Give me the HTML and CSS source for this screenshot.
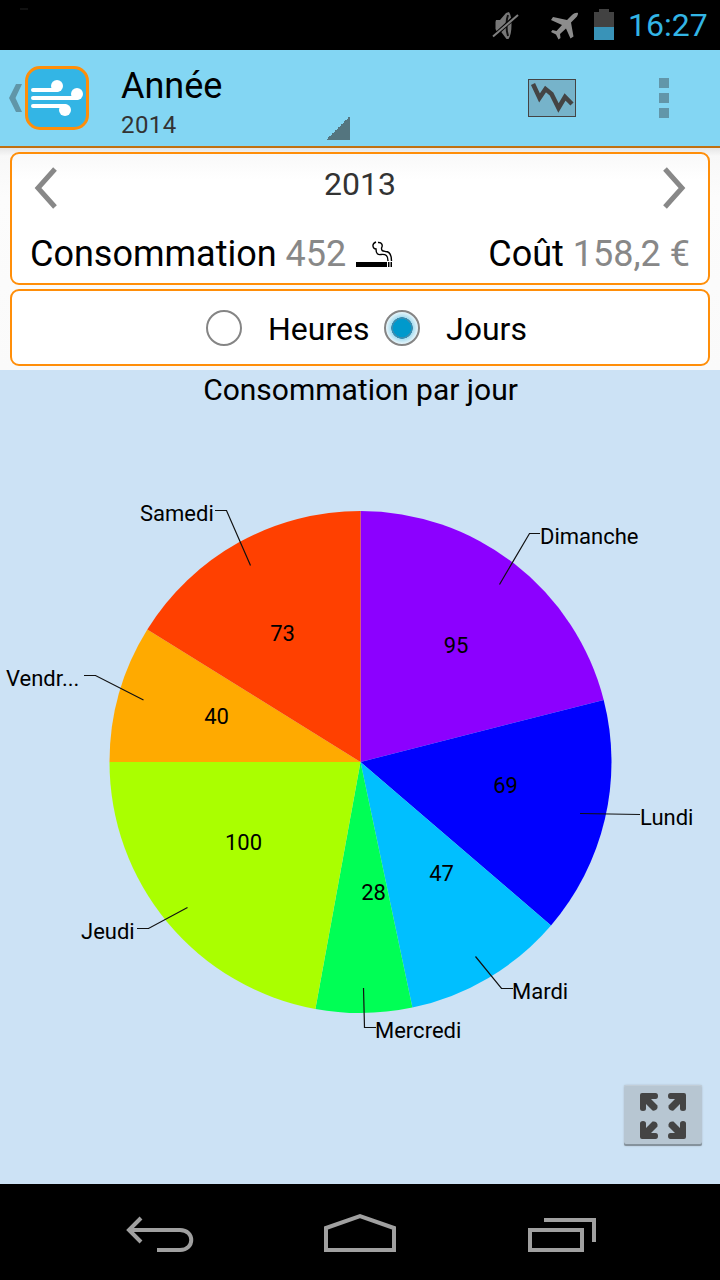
FILE: index.html
```html
<!DOCTYPE html>
<html lang="fr">
<head>
    <meta charset="UTF-8">
    <title>Consommation</title>
    <link rel="stylesheet" href="styles.css">
</head>
<body>

    <div class="status-bar">
        <svg class="status-icons" width="150" height="50" viewBox="470 0 150 50">
            <path d="M478 9h8" transform="translate(-458 0)" stroke="#222"/>
            <path d="M496 20h4l6-7 3-1c2 3 2.500 7 2.500 13s-1 11-3 14h-2l-6-8h-4l-1-2v-7z" fill="#777"/>
            <path d="M508 15c-2 5-2 15 0 21" fill="none" stroke="#111" stroke-width="2"/>
            <path d="M493 37l25-23" stroke="#000" stroke-width="4"/>
            <path d="M493 36.500l25-21.500" stroke="#808080" stroke-width="2"/>
            <path d="M578 13c-2-.5-4 .5-6 2l-5 5-14-3-2 3 11 5-5.500 6-4-1-1.500 2 5 2.500 2.500 5 2-1.500-.5-4 6-5.500 4.500 10 3-2-2.500-14 5-5c1.500-1.500 2-3 2-4.500z" fill="#8c8c8c"/>
            <path d="M594 12h5V9h10v3h5v15h-20z" fill="#424242"/>
            <path d="M594 27h20v13h-20z" fill="#3993b8"/>
        </svg>
        <span class="clock">16:27</span>
    </div>

    <div class="action-bar">
        <svg class="app-icon" width="90" height="64" viewBox="0 0 90 64">
            <path d="M16 18h6l-6.500 14L22 46h-6L9 32z" fill="#6096a8"/>
            <rect x="26.500" y="1.500" width="61" height="61" rx="13.500" fill="#33b5e5" stroke="#ff8e09" stroke-width="3"/>
            <g stroke="#fff" stroke-width="4" stroke-linecap="round">
                <path d="M33 24h24M33 32h44M33 40h32"/>
            </g>
            <g fill="#fff">
                <circle cx="57" cy="20" r="6"/>
                <circle cx="77" cy="28" r="6"/>
                <circle cx="65" cy="44" r="6"/>
            </g>
        </svg>
        <div class="spinner">
            <div class="spinner-title">Année</div>
            <div class="spinner-sub">2014</div>
        </div>
        <svg class="chart-icon" width="48" height="38" viewBox="0 0 48 38">
            <rect x=".5" y=".5" width="47" height="37" fill="#76b3ca" stroke="#444"/>
            <path d="M5 5l6.500 14L17.500 10l6 5L30.500 29 37 18l7 7" fill="none" stroke="#444" stroke-width="4.500"/>
        </svg>
        <div class="overflow"><i></i><i></i><i></i></div>
    </div>

    <div class="panels">
        <div class="card summary">
            <div class="period">
                <svg width="24" height="42" viewBox="0 0 24 42"><path d="M21 2L4 21l17 19" fill="none" stroke="#888" stroke-width="5"/></svg>
                <span>2013</span>
                <svg width="24" height="42" viewBox="0 0 24 42"><path d="M3 2l17 19L3 40" fill="none" stroke="#888" stroke-width="5"/></svg>
            </div>
            <div class="totals">
                <span>Consommation <b>452</b></span>
                <svg class="cigarette" width="37" height="27" viewBox="0 0 37 27">
                    <path d="M0 21h31v5H0zM32 21h1.500v5H32zM34.500 21h1.500v5h-1.500z"/>
                    <path d="M20 1c-5 2-3 7 0 7 0 5 2 6 5 5.500 5-.5 7 1 7 6.500M22 1.500c4-.5 5 3 3.500 5.500 0 3 1 3 4 3.500 4 0 6 3 6 9.500" fill="none" stroke="#000" stroke-width="1.400"/>
                </svg>
                <span class="cost">Coût <b>158,2 €</b></span>
            </div>
        </div>
        <div class="card options">
            <span class="radio"></span><span class="option-label">Heures</span>
            <span class="radio checked"></span><span class="option-label">Jours</span>
        </div>
    </div>

    <div class="chart">
        <svg width="720" height="814" viewBox="0 370 720 814">
            <text class="chart-title" x="360.500" y="400">Consommation par jour</text>
            <g>
                <path fill="#8c00ff" d="M360.500 762V511A251 251 0 0 1 603.700 699.900z"/>
                <path fill="#0000ff" d="M360.500 762L603.700 699.900A251 251 0 0 1 551 925.400z"/>
                <path fill="#00bfff" d="M360.500 762L551 925.400A251 251 0 0 1 412.400 1007.600z"/>
                <path fill="#00ff55" d="M360.500 762L412.400 1007.600A251 251 0 0 1 315.400 1008.900z"/>
                <path fill="#aaff00" d="M360.500 762L315.400 1008.900A251 251 0 0 1 109.500 762z"/>
                <path fill="#ffaa00" d="M360.500 762H109.500A251 251 0 0 1 147.300 629.500z"/>
                <path fill="#ff4000" d="M360.500 762L147.300 629.500A251 251 0 0 1 360.500 511z"/>
            </g>
            <g class="leader">
                <path d="M499.500 584.500l30-51H540"/>
                <path d="M580 813.500l60 1"/>
                <path d="M475.500 956.500l26 32H513"/>
                <path d="M363.500 988l1 39.500H376"/>
                <path d="M187.500 907.500l-39 21H137"/>
                <path d="M143.500 700l-48-24.500H84"/>
                <path d="M250.500 565.500l-24-55H215"/>
            </g>
            <g class="label">
                <text x="540" y="544">Dimanche</text>
                <text x="640" y="825">Lundi</text>
                <text x="512" y="999">Mardi</text>
                <text x="375" y="1038">Mercredi</text>
                <text x="81" y="939">Jeudi</text>
                <text x="6" y="686">Vendr...</text>
                <text x="140" y="521">Samedi</text>
            </g>
            <g class="label value">
                <text x="456" y="653">95</text>
                <text x="505.500" y="793">69</text>
                <text x="441.500" y="881">47</text>
                <text x="373.500" y="900">28</text>
                <text x="243.500" y="850">100</text>
                <text x="216.500" y="724">40</text>
                <text x="282.500" y="641">73</text>
            </g>
        </svg>
        <button class="fullscreen">
            <svg width="46" height="46" viewBox="0 0 46 46">
                <defs>
                    <path id="arrow" d="M0 2Q0 0 2 0H15.500Q18 0 18 3T15.500 6H11L17.500 12.500Q18 15 16.500 16.500T12.500 17.500L6 11V15.500Q6 18 3 18T0 15.500z"/>
                </defs>
                <use href="#arrow"/>
                <use href="#arrow" transform="matrix(-1 0 0 1 46 0)"/>
                <use href="#arrow" transform="matrix(1 0 0 -1 0 46)"/>
                <use href="#arrow" transform="matrix(-1 0 0 -1 46 46)"/>
            </svg>
        </button>
    </div>

    <div class="nav-bar">
        <svg width="720" height="96" viewBox="0 1184 720 96" fill="none" stroke="#a0a0a0" stroke-width="4">
            <path d="M141 1218l-12 12 12 12M130 1230h50c15 0 15 20 0 20h-23"/>
            <path d="M326 1250v-22l34-12 34 12v22z"/>
            <path d="M530 1230h52v20h-52zM544 1220h50v22"/>
        </svg>
    </div>

</body>
</html>
```
FILE: styles.css
```css
* {
    box-sizing: border-box;
}
body {
    margin: 0;
    width: 720px;
    height: 1280px;
    overflow: hidden;
    display: flex;
    flex-direction: column;
    font-family: Roboto, sans-serif;
    color: #000;
    background: #000;
}
svg {
    display: block;
    flex: none;
}
.status-bar {
    height: 50px;
    display: flex;
    justify-content: flex-end;
    align-items: center;
    padding-right: 12px;
    background: #000;
}
.status-icons {
    overflow: visible;
}
.clock {
    width: 80px;
    margin-left: 8px;
    font-size: 32px;
    line-height: 50px;
    color: #33b5e5;
}
.action-bar {
    height: 98px;
    display: flex;
    align-items: center;
    background: #83d6f3;
    border-bottom: 2px solid #c07010;
}
.app-icon {
    width: 90px;
}
.spinner {
    width: 229px;
    height: 76px;
    margin: 8px 0 0 31px;
    background: linear-gradient(135deg, transparent 50%, #54757f 50%) right bottom / 24px 24px no-repeat;
}
.spinner-title {
    font-size: 36px;
    line-height: 44px;
}
.spinner-sub {
    font-size: 24px;
    line-height: 34px;
    letter-spacing: 0.4px;
    color: #333;
}
.chart-icon {
    margin-left: 178px;
}
.overflow {
    display: flex;
    flex-direction: column;
    gap: 5px;
    margin-left: 83px;
}
.overflow i {
    width: 10px;
    height: 10px;
    background: #6296a9;
}
.panels {
    height: 222px;
    display: flex;
    flex-direction: column;
    gap: 4px;
    padding: 4px 10px;
    background: linear-gradient(#e6e6e6, #f8f8f8 8px, #fcfcfc 50px, #fafafa);
}
.card {
    border: 2px solid #ff8e09;
    border-radius: 9px;
    background: #fff;
}
.summary {
    height: 133px;
    padding: 12px 18px 0;
    background: linear-gradient(#f9f9f9, #fff 26px);
}
.period {
    display: flex;
    justify-content: space-between;
    align-items: center;
    height: 44px;
    padding: 0 4px;
    font-size: 32px;
    color: #333;
}
.period span {
    line-height: 36px;
    margin-bottom: 8px;
}
.totals {
    display: flex;
    align-items: center;
    height: 48px;
    margin-top: 20px;
    font-size: 36px;
}
.totals b {
    font-weight: 400;
    color: #888;
}
.cigarette {
    margin-left: 10px;
}
.cost {
    margin-left: auto;
}
.options {
    height: 77px;
    display: flex;
    align-items: center;
    padding-left: 194px;
    font-size: 32px;
}
.radio {
    width: 36px;
    height: 36px;
    border: 2px solid #858585;
    border-radius: 50%;
}
.radio.checked {
    margin-left: -14px;
    background: radial-gradient(circle, #0099cc 0 9px, #398db0 9px 10.5px, #a9ddf0 11px, #e8f6fb 16px);
}
.option-label {
    width: 130px;
    margin-left: 26px;
    padding-top: 3px;
}
.chart {
    position: relative;
    height: 814px;
    background: #cce2f5;
}
.chart-title {
    font-size: 30px;
    text-anchor: middle;
}
.leader {
    fill: none;
    stroke: #111;
    stroke-width: 1.2;
}
.label {
    font-size: 22px;
}
.value {
    text-anchor: middle;
}
.fullscreen {
    position: absolute;
    right: 18px;
    bottom: 38px;
    width: 78px;
    height: 61px;
    display: flex;
    justify-content: center;
    align-items: center;
    padding: 0;
    border: 0;
    border-radius: 2px;
    background: #b7c6d2;
    box-shadow: inset 0 -2px #85929c, inset 0 1px #c2ced8, 0 0 2px #aab8c4;
    fill: #444;
}
.nav-bar {
    height: 96px;
    background: #000;
}
```
